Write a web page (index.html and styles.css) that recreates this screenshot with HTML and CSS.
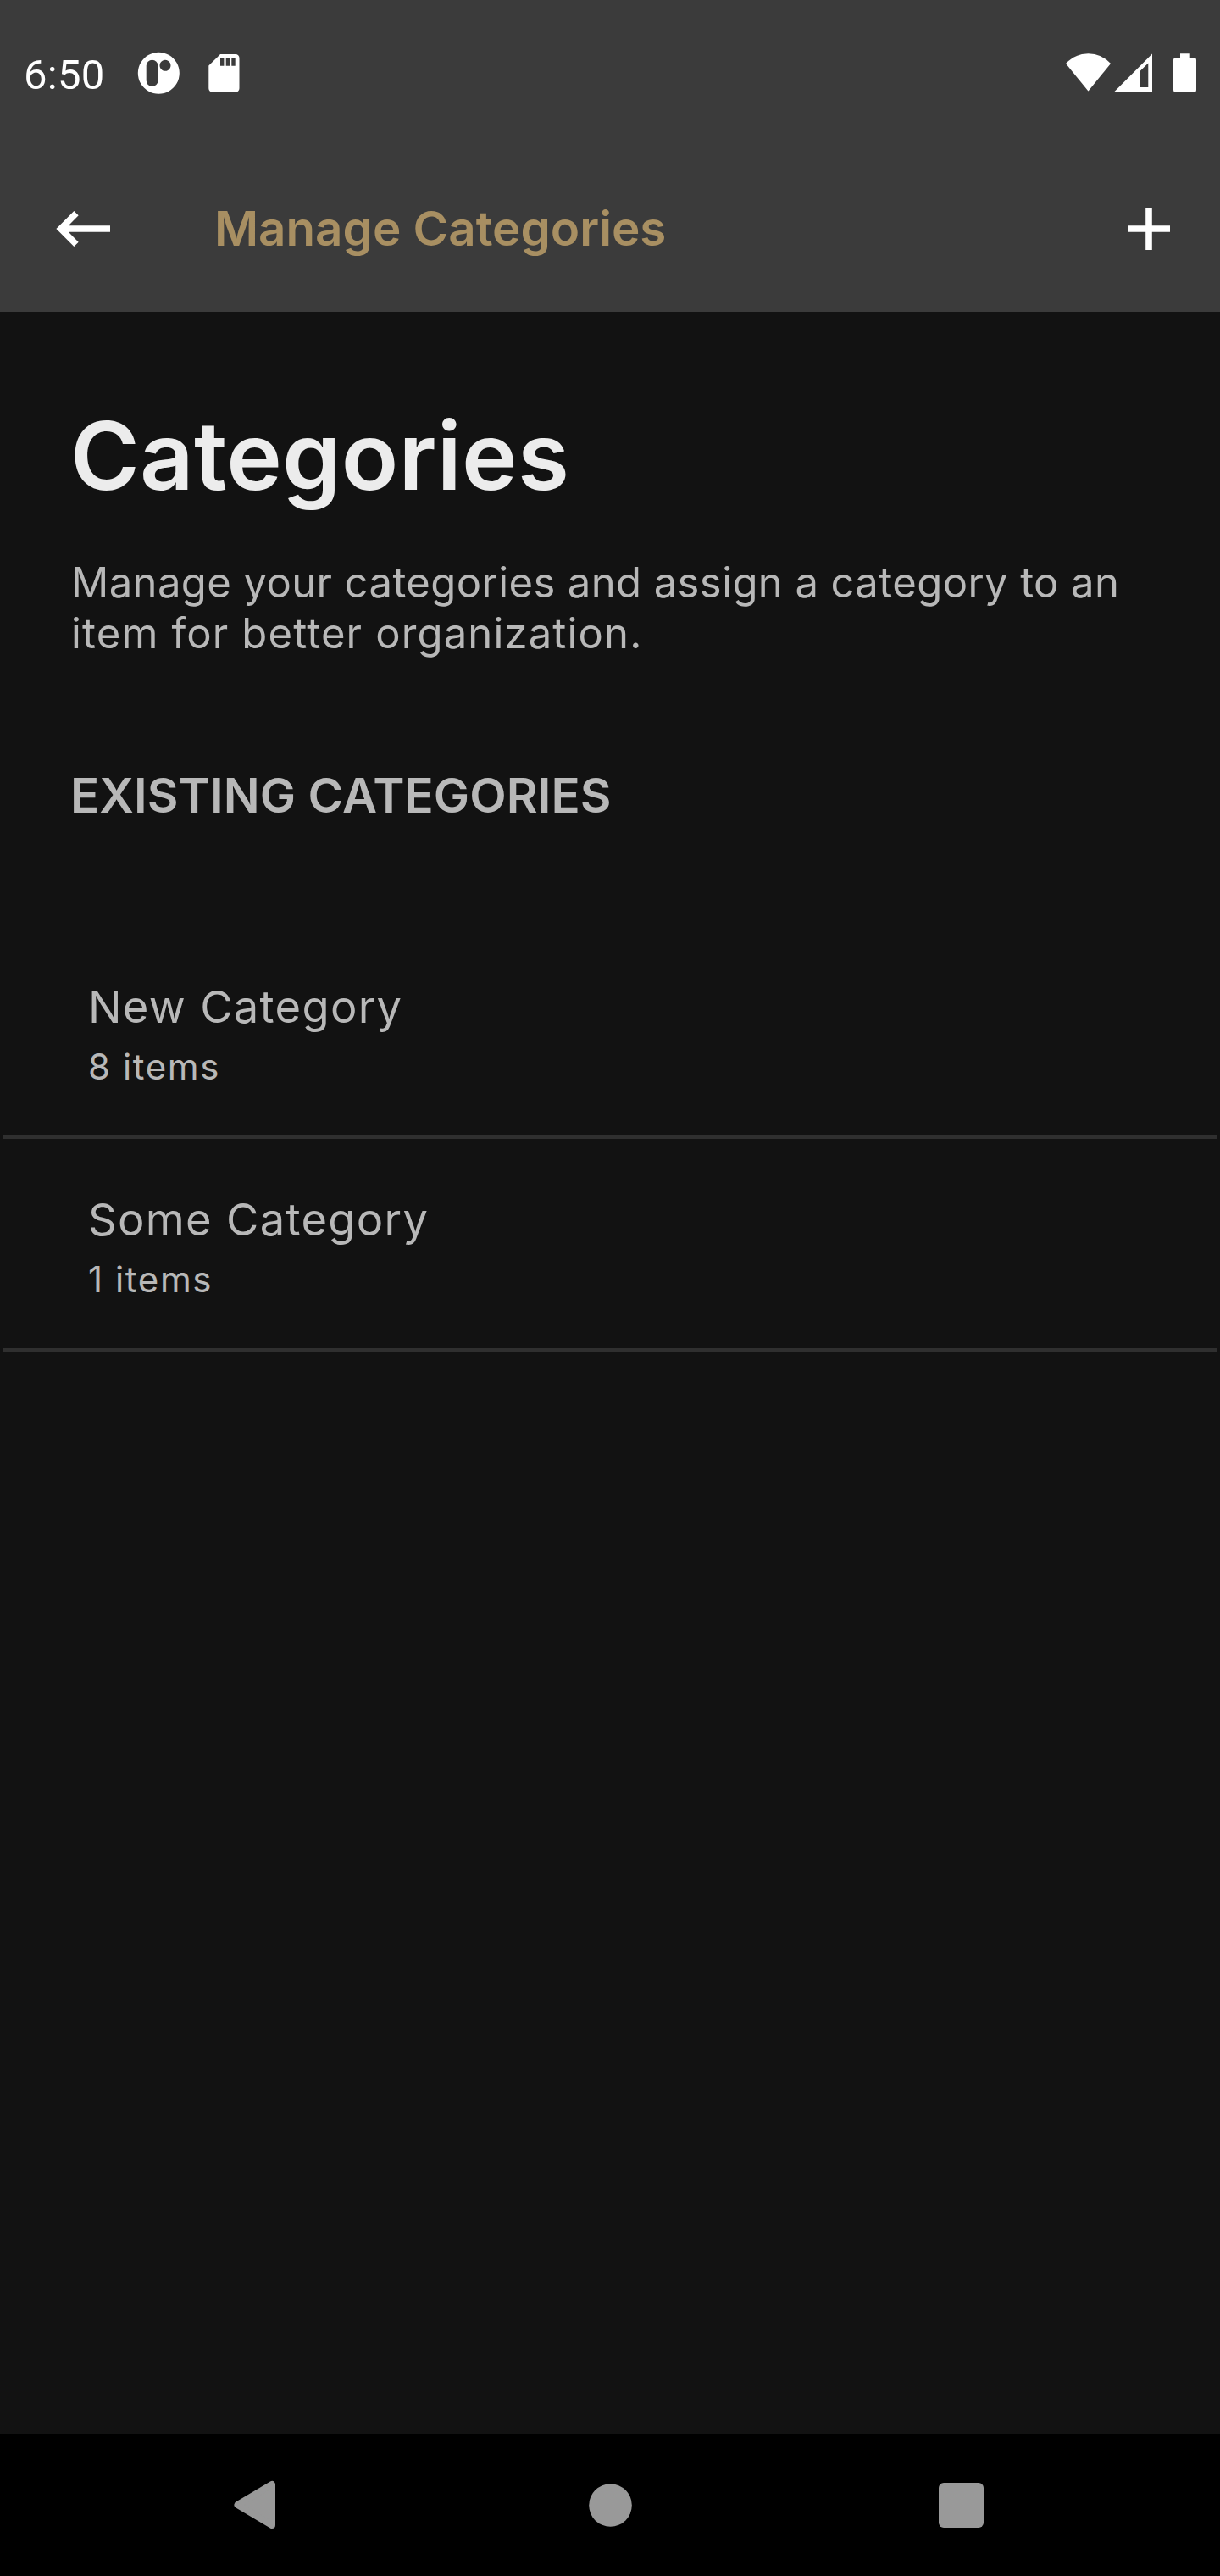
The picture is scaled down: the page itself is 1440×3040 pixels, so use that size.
FILE: index.html
```html
<!DOCTYPE html>
<html lang="en">
<head>
<meta charset="utf-8">
<title>Manage Categories</title>
<link rel="stylesheet" href="styles.css">
</head>
<body>
<div class="screen">
  <header class="top">
    <div class="status">
      <span class="time">6:50</span>
      <svg class="notifications" width="126" height="50" viewBox="160 61 126 50" fill="#fff">
        <path fill-rule="evenodd" d="M187.300 61.800a24.500 24.500 0 1 0 .01 0zM179.600 70.700a6.900 6.900 0 0 1 6.900 6.900v17.500a6.900 6.900 0 0 1-13.800 0v-17.500a6.900 6.900 0 0 1 6.900-6.900zM195 70.800a6.500 6.500 0 1 1-.01 0z"/>
        <path fill-rule="evenodd" d="M260 64h18a4.500 4.500 0 0 1 4.500 4.500v35.800a4.500 4.500 0 0 1-4.500 4.500h-27.200a4.500 4.500 0 0 1-4.500-4.500V77.500zM260 68.300v9.400h4.400v-9.400zM266.700 68.300v9.400h4.400v-9.400zM273.300 68.300v9.400h4.400v-9.400z"/>
      </svg>
      <svg class="system" width="158" height="50" viewBox="1256 61 158 50" fill="#fff">
        <path d="M1258 75Q1269 63.300 1284.500 63.300T1311 75L1284.500 107.500z"/>
        <path fill-rule="evenodd" d="M1360 63.500V108h-44.500zM1355.300 74.600L1346 83.500V103h9.300z"/>
        <path d="M1393 63.300h11.700V68h4.300a3 3 0 0 1 3 3v35a3 3 0 0 1-3 3h-21a3 3 0 0 1-3-3V71a3 3 0 0 1 3-3h5z"/>
      </svg>
    </div>
    <div class="appbar">
      <svg class="back" width="66" height="46" viewBox="66 247 66 46" fill="none" stroke="#fff" stroke-width="7.500">
        <path d="M90 251.700L71.700 270L90 288.300M72 270H130"/>
      </svg>
      <h2 class="bar-title">Manage Categories</h2>
      <svg class="add" width="50" height="50" viewBox="0 0 50 50" fill="#fff">
        <path d="M21.200 0h7.600v21.200H50v7.600H28.800V50h-7.600V28.800H0v-7.600h21.200z"/>
      </svg>
    </div>
  </header>
  <main class="content">
    <h1 class="heading">Categories</h1>
    <p class="intro">Manage your categories and assign a category to an<br><span class="intro-end">item for better organization.</span></p>
    <h3 class="section">EXISTING CATEGORIES</h3>
    <ul class="list">
      <li class="row"><div class="name">New Category</div><div class="count">8 items</div></li>
      <li class="row"><div class="name">Some Category</div><div class="count">1 items</div></li>
    </ul>
  </main>
  <nav class="navbar">
    <svg width="50" height="58" viewBox="0 0 50 58" fill="#999" stroke="#999" stroke-width="8" stroke-linejoin="round"><path d="M4.500 29L45 5V53z"/></svg>
    <svg class="home" width="51" height="51" viewBox="0 0 51 51" fill="#999"><circle cx="25.500" cy="25.500" r="25.300"/></svg>
    <svg width="53" height="53" viewBox="0 0 53 53" fill="#999"><rect width="53" height="53" rx="6"/></svg>
  </nav>
</div>
</body>
</html>
```
FILE: styles.css
```css
body {
  margin: 0;
  background: #121212;
  color: #b8b8b8;
  font-family: Inter, "Open Sans", sans-serif;
}

h1, h2, h3, p, ul {
  margin: 0;
  padding: 0;
  font-weight: 600;
}

svg {
  display: block;
  flex: none;
}

.screen {
  display: flex;
  flex-direction: column;
  width: 1440px;
  height: 3040px;
  overflow: hidden;
}

.top {
  height: 368px;
  background: #3b3b3b;
}

.status {
  display: flex;
  align-items: center;
  box-sizing: border-box;
  height: 172px;
  padding: 0 26px 0 28px;
}

.time {
  width: 132px;
  margin-top: 4px;
  color: #fff;
  font: 49px Roboto, sans-serif;
  letter-spacing: 0.3px;
}

.system {
  margin-left: auto;
}

.appbar {
  display: flex;
  align-items: center;
  box-sizing: border-box;
  height: 196px;
  padding: 0 59px 0 66px;
}

.bar-title {
  margin-left: 121px;
  color: #a88f62;
  font-size: 56.5px;
  line-height: 68px;
}

.add {
  margin-left: auto;
}

.content {
  flex: 1;
  padding-top: 106px;
}

.heading {
  margin-left: 83px;
  color: #ececec;
  font-size: 111px;
  line-height: 128px;
  letter-spacing: 0.2px;
}

.intro {
  margin: 56px 0 0 84px;
  font-size: 49px;
  font-weight: 400;
  line-height: 59.5px;
  letter-spacing: 0.4px;
  white-space: nowrap;
}

.intro-end {
  letter-spacing: 1.15px;
}

.section {
  margin: 128px 0 0 83px;
  font-size: 56.5px;
  line-height: 68px;
  letter-spacing: 0.1px;
}

.list {
  margin: 120px 4px 0;
  list-style: none;
  font-weight: 400;
}

.row {
  box-sizing: border-box;
  height: 251px;
  padding: 63px 0 0 100px;
  border-bottom: 4px solid #2f2f2f;
}

.name {
  font-size: 52.5px;
  line-height: 64px;
  letter-spacing: 1.3px;
}

.count {
  margin-top: 13px;
  font-size: 42px;
  line-height: 52px;
  letter-spacing: 1.6px;
}

.navbar {
  display: flex;
  align-items: center;
  justify-content: space-between;
  box-sizing: border-box;
  height: 168px;
  padding: 0 279px 0 276px;
  background: #000;
}

.home {
  margin-left: 6px;
}
```
